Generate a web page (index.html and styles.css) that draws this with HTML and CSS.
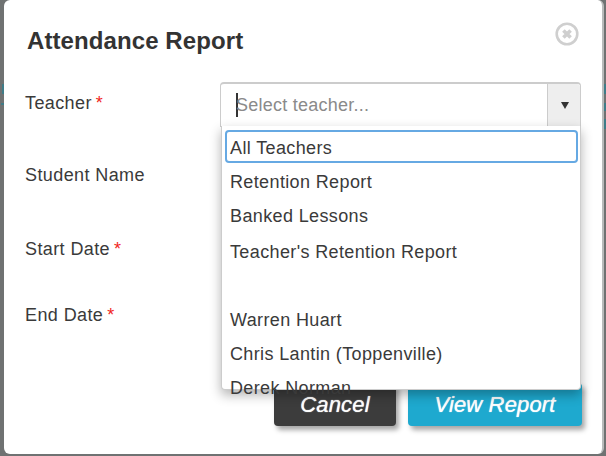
FILE: index.html
```html
<!DOCTYPE html>
<html lang="en">
<head>
<meta charset="utf-8">
<title>Attendance Report</title>
<link rel="stylesheet" href="styles.css">
</head>
<body>
<div class="modal">
  <header class="modal-head">
    <h1 class="title">Attendance Report</h1>
    <svg class="close" width="24" height="24" viewBox="0 0 24 24" aria-label="Close">
      <circle cx="12" cy="12" r="10.3" fill="none" stroke="#cfcfcf" stroke-width="2.6"/>
      <path d="M8.4 8.4 15.6 15.6M15.6 8.4 8.4 15.6" fill="none" stroke="#cfcfcf" stroke-width="3.6"/>
    </svg>
  </header>
  <form class="form">
    <div class="row row-teacher">
      <label class="label">Teacher <span class="req">*</span></label>
      <div class="select">
        <div class="select-input"><span class="caret"></span><span class="placeholder">Select teacher...</span></div>
        <div class="select-arrow"><span class="arrow"></span></div>
        <ul class="menu">
          <li class="opt focused">All Teachers</li>
          <li class="opt">Retention Report</li>
          <li class="opt">Banked Lessons</li>
          <li class="opt opt-teacher">Teacher's Retention Report</li>
          <li class="opt opt-blank">&nbsp;</li>
          <li class="opt">Warren Huart</li>
          <li class="opt">Chris Lantin (Toppenville)</li>
          <li class="opt">Derek Norman</li>
        </ul>
      </div>
    </div>
    <div class="row row-student"><label class="label">Student Name</label></div>
    <div class="row row-start"><label class="label">Start Date <span class="req">*</span></label></div>
    <div class="row row-end"><label class="label">End Date <span class="req">*</span></label></div>
    <div class="actions">
      <button type="button" class="btn btn-cancel">Cancel</button>
      <button type="button" class="btn btn-view">View Report</button>
    </div>
  </form>
</div>
</body>
</html>
```
FILE: styles.css
```css
* { box-sizing: border-box; }
html, body { margin: 0; height: 100%; }
body {
  width: 606px;
  height: 456px;
  overflow: hidden;
  background-color: #6f7272;
  background-image:
    linear-gradient(#3f7c88, #3f7c88),
    linear-gradient(#3f7c88, #3f7c88),
    linear-gradient(#3f7c88, #3f7c88),
    linear-gradient(#3f7c88, #3f7c88),
    linear-gradient(#3f7c88, #3f7c88);
  background-repeat: no-repeat;
  background-size: 2px 10px, 3px 2px, 2px 10px, 2px 8px, 2px 10px;
  background-position: 2px 84px, 1px 103px, 604px 84px, 604px 103px, 604px 119px;
  font-family: "Liberation Sans", Arial, sans-serif;
  color: #333;
  padding: 0 2px 2px 4px;
}
.modal {
  height: 454px;
  background: #fff;
  border-right: 2px solid #b9bbbb;
  border-radius: 6px;
  padding: 0 21px;
  display: flex;
  flex-direction: column;
}
.modal-head {
  height: 82px;
  display: flex;
  justify-content: space-between;
  align-items: flex-start;
  padding-top: 22px;
}
.title {
  margin: 6px 0 0 2px;
  font-size: 24px;
  line-height: 26px;
  font-weight: 700;
  letter-spacing: .09px;
  color: #333;
}
.close { margin-right: 2px; }
.form { display: flex; flex-direction: column; flex: 1; }
.row { display: flex; align-items: flex-start; }
.row-teacher { height: 80px; }
.row-student { height: 74px; padding-top: 2px; }
.row-start { height: 68px; padding-top: 2px; }
.row-end { height: 79px; }
.label {
  width: 195px;
  font-size: 18px;
  line-height: 22px;
  letter-spacing: .4px;
  color: #3a3a3a;
  flex: none;
}
.row-teacher .label { padding-top: 10px; }
.req { color: #f0261c; margin-left: -1.5px; }
.select {
  position: relative;
  width: 361px;
  height: 45px;
  border: 1px solid #ccc;
  border-top-width: 2px;
  border-radius: 4px 4px 0 0;
  display: flex;
  background: #fff;
}
.select-input {
  flex: 1;
  display: flex;
  align-items: center;
  padding-left: 15px;
}
.caret { width: 2px; height: 24px; background: #333; flex: none; }
.placeholder { font-size: 18px; color: #8a8a8a; letter-spacing: .25px; margin-left: -2px; }
.select-arrow {
  width: 33px;
  padding-left: 2px;
  background: #eee;
  border-left: 1px solid #ccc;
  display: flex;
  align-items: center;
  justify-content: center;
  border-top-right-radius: 3px;
}
.arrow {
  width: 0; height: 0;
  border-left: 4.5px solid transparent;
  border-right: 4.5px solid transparent;
  border-top: 7px solid #333;
}
.menu {
  position: absolute;
  left: 0;
  top: 42px;
  width: 360px;
  height: 264px;
  margin: 0;
  padding: 4px 2px 0 3px;
  list-style: none;
  background: #fff;
  border: 1px solid #ccc;
  border-top: 0;
  border-radius: 0 0 4px 4px;
  box-shadow: 0 5px 12px rgba(0,0,0,.3);
  z-index: 2;
}
.opt {
  height: 34px;
  line-height: 38px;
  padding: 0 5px;
  font-size: 18px;
  letter-spacing: .37px;
  color: #3a3a3a;
  white-space: nowrap;
}
.opt.focused {
  border: 2px solid #66a9e3;
  border-radius: 4px;
  line-height: 33px;
  height: 33px;
  padding: 0 3px;
}
.opt-teacher { height: 38px; line-height: 42px; }
.opt-blank { height: 32px; }
.actions {
  display: flex;
  justify-content: flex-end;
  gap: 12px;
  margin-right: -1px;
}
.btn {
  height: 43px;
  border: 0;
  border-radius: 4px;
  color: #fff;
  font-family: inherit;
  font-style: italic;
  font-size: 22px;
  letter-spacing: .15px;
  box-shadow: 3px 4px 5px rgba(0,0,0,.35);
  text-shadow: 0 0 1px #fff;
  padding: 0;
}
.btn-cancel { width: 122px; background: #3c3c3c; }
.btn-view { width: 174px; background: #1ea9cf; }
```
